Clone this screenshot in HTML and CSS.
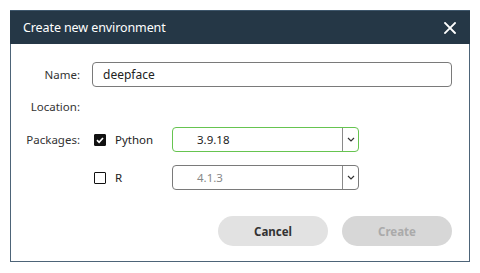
FILE: index.html
```html
<!DOCTYPE html>
<html>
<head>
<meta charset="utf-8">
<link rel="stylesheet" href="styles.css">
</head>
<body>
<div class="dialog">
  <div class="titlebar">
    <span class="title">Create new environment</span>
    <svg class="close" width="12" height="12" viewBox="0 0 12 12"><path d="M1 1L11 11M11 1L1 11" stroke="#fff" stroke-width="1.8" stroke-linecap="square"/></svg>
  </div>
  <div class="content">
    <div class="form">
      <label class="lbl">Name:</label>
      <div class="input">deepface</div>
      <label class="lbl loc">Location:</label>
      <div class="loc-val"></div>
      <label class="lbl">Packages:</label>
      <div class="pkg">
        <div class="check">
          <span class="box on"><svg width="12" height="12" viewBox="0 0 12 12"><path d="M3 6.2L5.1 8.3L9 4" stroke="#fff" stroke-width="1.7" fill="none"/></svg></span>
          <span class="ctext">Python</span>
        </div>
        <div class="select active">
          <span class="val">3.9.18</span>
          <span class="arrow"><svg width="8" height="5" viewBox="0 0 8 5"><path d="M1 1L4 4L7 1" stroke="#333" stroke-width="1.2" fill="none"/></svg></span>
        </div>
      </div>
      <div></div>
      <div class="pkg">
        <div class="check">
          <span class="box"></span>
          <span class="ctext">R</span>
        </div>
        <div class="select">
          <span class="val dim">4.1.3</span>
          <span class="arrow"><svg width="8" height="5" viewBox="0 0 8 5"><path d="M1 1L4 4L7 1" stroke="#333" stroke-width="1.2" fill="none"/></svg></span>
        </div>
      </div>
    </div>
    <div class="buttons">
      <button class="btn cancel">Cancel</button>
      <button class="btn create">Create</button>
    </div>
  </div>
</div>
</body>
</html>
```
FILE: styles.css
```css
html, body { margin: 0; padding: 0; background: #fff; }
body { font-family: "Noto Sans", "Open Sans", sans-serif; color: #222; font-size: 11.5px; }
.dialog {
  margin: 10px 0 0 10px;
  width: 458px;
  height: 251px;
  border: 1px solid #4d6478;
  border-top: none;
  display: flex;
  flex-direction: column;
}
.titlebar {
  background: #253746;
  height: 33px;
  margin: 0 -1px;
  display: flex;
  align-items: center;
  justify-content: space-between;
  padding: 0 14px 0 13px;
  color: #fff;
  border-top: 1px solid #3e566b;
}
.title { font-size: 12.5px; letter-spacing: -0.1px; }
.close { display: block; margin-top: 1px; }
.content { padding: 18px 17px 0 0; flex: 1; display: flex; flex-direction: column; }
.form {
  display: grid;
  grid-template-columns: 69px 1fr;
  column-gap: 12px;
  row-gap: 13px;
  align-items: center;
}
.lbl { text-align: right; color: #333; }
.loc { height: 14px; line-height: 14px; }
.input {
  height: 23px;
  border: 1px solid #7a7a7a;
  border-radius: 4px;
  padding: 0 10px;
  line-height: 23px;
  font-size: 12px;
  color: #222;
}
.pkg { display: flex; align-items: center; }
.check { width: 80px; display: flex; align-items: center; }
.box {
  width: 10px; height: 10px;
  border: 1.5px solid #111;
  border-radius: 1px;
  margin-left: 2px;
  display: flex; align-items: center; justify-content: center;
}
.box.on { background: #111; }
.box svg { display: block; flex: none; }
.ctext { margin-left: 9px; font-size: 11.5px; color: #222; }
.select {
  width: 185px;
  height: 23px;
  border: 1px solid #7a7a7a;
  border-radius: 4px;
  display: flex;
  align-items: center;
}
.select.active { border-color: #66c450; }
.val { flex: 1; padding-left: 24px; font-size: 11.5px; color: #222; }
.val.dim { color: #888; }
.arrow {
  width: 15px; height: 100%;
  border-left: 1px solid #8a8a8a;
  display: flex; align-items: center; justify-content: center;
}
.arrow svg { display: block; }
.buttons { display: flex; justify-content: flex-end; gap: 14px; margin-top: 26px; }
.btn {
  width: 110px; height: 30px;
  border: none; border-radius: 15px;
  font-family: inherit; font-weight: bold; font-size: 11.5px;
}
.cancel { background: #e2e2e2; color: #333; }
.create { background: #d7d7d7; color: #aaa; }
```
